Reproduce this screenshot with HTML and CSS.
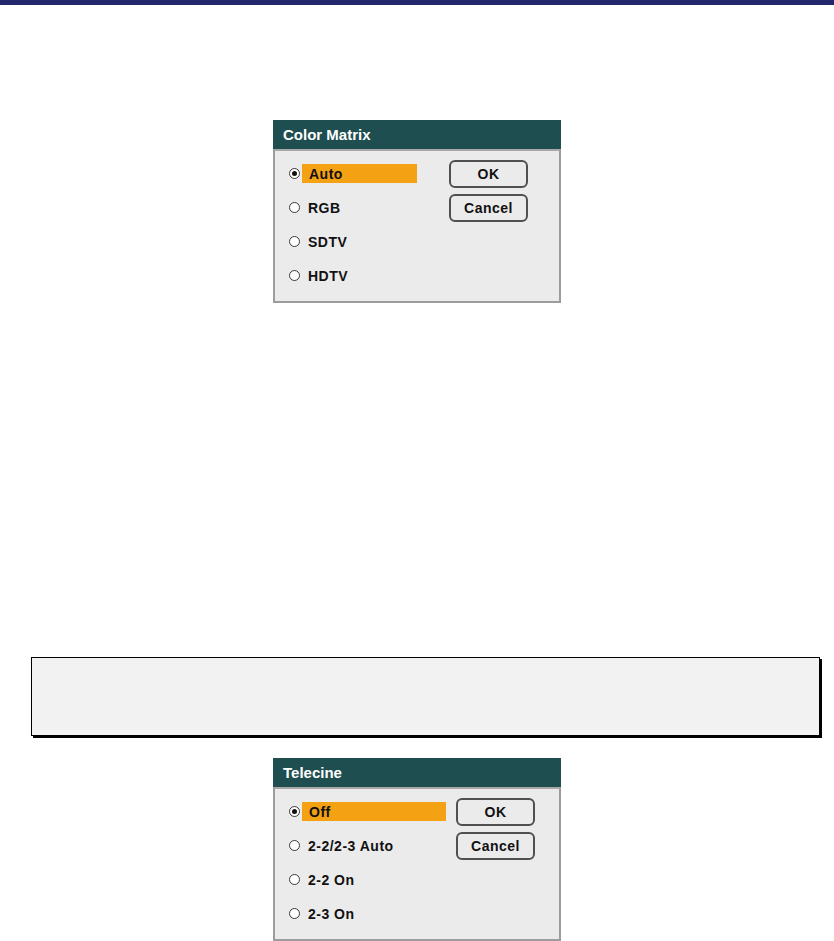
FILE: index.html
```html
<!DOCTYPE html>
<html>
<head>
<meta charset="utf-8">
<link rel="stylesheet" href="styles.css">
</head>
<body>
<div class="topbar"></div>

<div class="dialog dialog-matrix">
  <div class="dialog-title">Color Matrix</div>
  <div class="dialog-body">
    <div class="options">
      <div class="option selected"><span class="radio"></span><span class="label">Auto</span></div>
      <div class="option"><span class="radio"></span><span class="label">RGB</span></div>
      <div class="option"><span class="radio"></span><span class="label">SDTV</span></div>
      <div class="option"><span class="radio"></span><span class="label">HDTV</span></div>
    </div>
    <div class="buttons">
      <div class="btn">OK</div>
      <div class="btn">Cancel</div>
    </div>
  </div>
</div>

<div class="note"></div>

<div class="dialog dialog-telecine">
  <div class="dialog-title">Telecine</div>
  <div class="dialog-body">
    <div class="options">
      <div class="option selected"><span class="radio"></span><span class="label">Off</span></div>
      <div class="option"><span class="radio"></span><span class="label">2-2/2-3 Auto</span></div>
      <div class="option"><span class="radio"></span><span class="label">2-2 On</span></div>
      <div class="option"><span class="radio"></span><span class="label">2-3 On</span></div>
    </div>
    <div class="buttons">
      <div class="btn">OK</div>
      <div class="btn">Cancel</div>
    </div>
  </div>
</div>
</body>
</html>
```

FILE: styles.css
```css
html, body {
  margin: 0;
  padding: 0;
  background: #ffffff;
}

body {
  font-family: "Liberation Sans", Arial, sans-serif;
  width: 834px;
  height: 941px;
  overflow: hidden;
}

.topbar {
  height: 5px;
  background: #22266a;
}

.dialog {
  width: 288px;
  margin: 0 auto;
}

.dialog-matrix {
  margin-top: 115px;
}

.dialog-telecine {
  margin-top: 22px;
}

.dialog-title {
  height: 29px;
  line-height: 29px;
  background: #1e4e4f;
  color: #ffffff;
  font-size: 15px;
  font-weight: bold;
  padding-left: 10px;
}

.dialog-body {
  background: #ebebeb;
  border: 2px solid #9c9c9c;
  border-top-color: #a8a8a8;
  display: flex;
  align-items: flex-start;
  padding: 9px 0 16px 14px;
}

.options {
  display: flex;
  flex-direction: column;
  gap: 15px;
  margin-top: 4px;
}

.option {
  display: flex;
  align-items: center;
  height: 19px;
  gap: 2px;
}

.radio {
  width: 9px;
  height: 9px;
  border: 1px solid #3a3a3a;
  border-radius: 50%;
  background: #ffffff;
  position: relative;
  flex: none;
}

.option.selected .radio::after {
  content: "";
  position: absolute;
  left: 2px;
  top: 2px;
  width: 5px;
  height: 5px;
  border-radius: 50%;
  background: #111111;
}

.label {
  display: block;
  height: 19px;
  line-height: 20px;
  padding-left: 6px;
  font-size: 14px;
  font-weight: bold;
  letter-spacing: 0.5px;
  color: #111111;
  white-space: nowrap;
  box-sizing: border-box;
}

.option.selected .label {
  background: #f4a113;
  padding-left: 7px;
}

.dialog-matrix .label {
  width: 115px;
}

.dialog-telecine .label {
  width: 144px;
}

.buttons {
  display: flex;
  flex-direction: column;
  gap: 6px;
}

.dialog-matrix .buttons {
  margin-left: 32px;
}

.dialog-telecine .buttons {
  margin-left: 10px;
}

.btn {
  width: 79px;
  height: 28px;
  box-sizing: border-box;
  border: 2px solid #505050;
  border-radius: 6px;
  text-align: center;
  line-height: 25px;
  font-size: 14px;
  font-weight: bold;
  letter-spacing: 0.5px;
  color: #111111;
}

.note {
  margin-top: 354px;
  margin-left: 31px;
  width: 789px;
  height: 79px;
  box-sizing: border-box;
  border: 1px solid #000000;
  background: #f2f2f2;
  box-shadow: 2px 2px 0 #000000;
}
```
